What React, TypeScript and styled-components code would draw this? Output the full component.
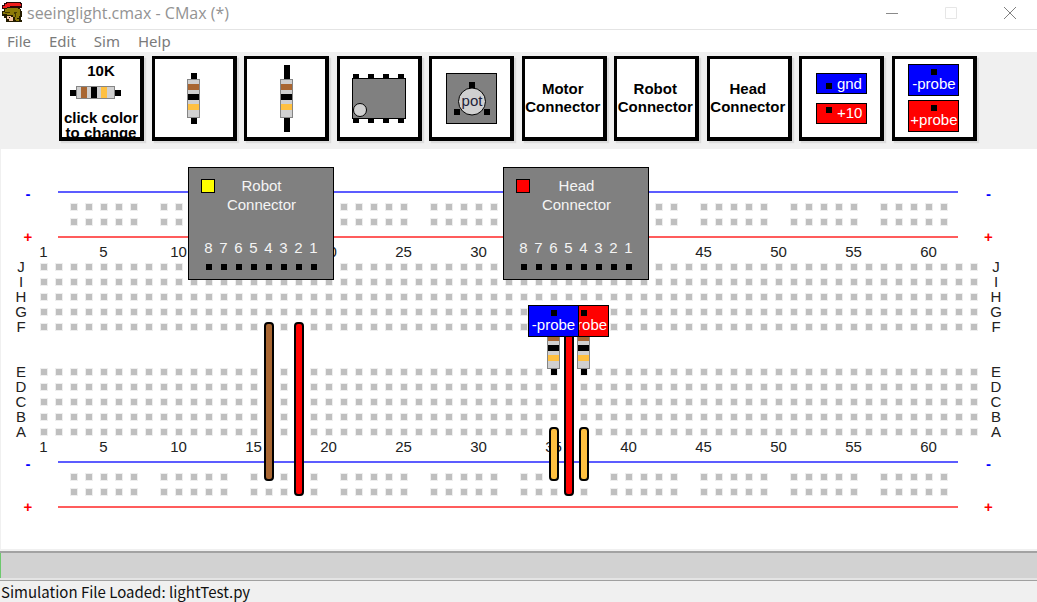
import React from "react";
import styled, { createGlobalStyle } from "styled-components";

const PITCH = 15;
const COLUMNS = 63;

const color = {
  face: "#f0f0f0",
  hole: "#bfbfbf",
  blueRail: "#5c5cff",
  redRail: "#ff5c5c",
  brown: "#a86632",
  amber: "#ffc040",
  body: "#d0d0d0",
  chip: "#808080",
};

const GlobalStyle = createGlobalStyle`
  * { box-sizing: border-box; }
  body { margin: 0; background: #fff; }
  button { margin: 0; padding: 0; border: 0; background: none; font: inherit; color: inherit; }
`;

const Window = styled.div`
  min-height: 100vh;
  display: flex;
  flex-direction: column;
  background: #fff;
  font-family: "Liberation Sans", Arial, sans-serif;
  font-size: 15px;
`;

const TitleBar = styled.header`
  height: 30px;
  display: flex;
  align-items: center;
  padding: 0 20px 4px 2px;
  border-bottom: 1px solid #e4e4e4;
  font-family: "Open Sans", sans-serif;
`;

const Title = styled.h1`
  flex: 1;
  margin: 0 0 0 5px;
  font-size: 16px;
  line-height: 20px;
  font-weight: 400;
  color: #939393;
`;

const WindowControls = styled.div`
  display: flex;
  gap: 45px;
`;

const ControlButton = styled.button<{ $stroke: string }>`
  width: 14px;
  height: 14px;
  display: block;
  svg { display: block; fill: none; stroke: ${(p) => p.$stroke}; }
`;

const MenuBar = styled.nav`
  height: 22px;
  display: flex;
  align-items: center;
  gap: 18px;
  padding-left: 7px;
  font-family: "Noto Sans", sans-serif;
  font-size: 15px;
  line-height: 20px;
  color: #7a7a7a;
`;

const MenuButton = styled.button``;

const Toolbar = styled.div`
  height: 97px;
  display: flex;
  justify-content: space-between;
  align-items: flex-start;
  padding: 4px 60px 0 59px;
  background: ${color.face};
`;

const Tile = styled.button<{ $gap?: number }>`
  width: 85px;
  height: 85px;
  display: flex;
  flex-direction: column;
  align-items: center;
  justify-content: center;
  gap: ${(p) => p.$gap ?? 0}px;
  border: solid #000;
  border-width: 3px 4px 4px 3px;
  background: #fff;
  box-shadow: 2px 2px 1px #dcdcdc;
  overflow: hidden;
  svg { display: block; flex: none; }
`;

const TileName = styled.span`
  padding-right: 2px;
  line-height: 18px;
  font-weight: 700;
  text-align: center;
  white-space: pre-line;
`;

const ResistorPicker = styled.span`
  align-self: stretch;
  height: 78px;
  display: flex;
  flex-direction: column;
  align-items: center;
  padding-top: 3px;
  font-weight: 700;
  line-height: 18px;
`;

const PickerHint = styled.span`
  margin-top: 11px;
  line-height: 15px;
  white-space: nowrap;
  text-align: center;
`;

const PickerDrawing = styled.span`
  margin: 6px 12px 0 0;
`;

const Pin = styled.span`
  flex: none;
  width: 6px;
  height: 6px;
  background: #000;
`;

const Power = styled.span<{ $fill: string; $raised?: boolean }>`
  width: 51px;
  height: 21px;
  display: flex;
  gap: 5px;
  padding: ${(p) => (p.$raised ? 3 : 9)}px 0 0 9px;
  border: 1px solid #000;
  background: ${(p) => p.$fill};
  color: #fff;
`;

const PowerName = styled.span<{ $raised?: boolean }>`
  margin-top: ${(p) => (p.$raised ? -4 : -9)}px;
  line-height: 19px;
`;

const ProbeBox = styled.span<{ $fill: string }>`
  width: 51px;
  height: 32px;
  display: flex;
  flex-direction: column;
  align-items: center;
  padding-top: 4px;
  border: 1px solid #000;
  background: ${(p) => p.$fill};
  color: #fff;
  line-height: 17px;
  white-space: nowrap;
`;

const Canvas = styled.main`
  flex: 1;
  padding: 35px 0 35px;
  border-left: 1px solid #f0f0f0;
  overflow: hidden;
`;

const Board = styled.div`
  position: relative;
  width: max-content;
  margin-left: -1px;
`;

const BoardRow = styled.div`
  height: ${PITCH}px;
  display: flex;
  line-height: ${PITCH}px;
  color: #222;
`;

const SideLabel = styled.span<{ $side: "left" | "right" }>`
  width: 36px;
  text-align: center;
  padding: ${(p) => (p.$side === "left" ? "0 0 0 6px" : "0 6px 0 0")};
`;

const Polarity = styled(SideLabel)<{ $negative?: boolean }>`
  padding: ${(p) => (p.$side === "left" ? "0 0 0 20px" : "0 21px 0 0")};
  font-weight: 700;
  line-height: ${(p) => (p.$negative ? 19 : 15)}px;
  color: ${(p) => (p.$negative ? "#00f" : "#f00")};
`;

const Cells = styled.div`
  display: grid;
  grid-template-columns: repeat(${COLUMNS}, ${PITCH}px);
`;

const Hole = styled.i<{ $col: number }>`
  grid-column: ${(p) => p.$col};
  width: 8px;
  height: 8px;
  margin: 4px 0 0 4px;
  border: 1px solid #eeeeee;
  background: ${color.hole};
`;

const ColumnNumber = styled.span<{ $col: number }>`
  grid-column: ${(p) => p.$col};
  grid-row: 1;
  justify-self: center;
`;

const RailLine = styled.div<{ $negative?: boolean }>`
  grid-column: 1 / -1;
  height: 2px;
  margin: 7px 23px 0 22px;
  background: ${(p) => (p.$negative ? color.blueRail : color.redRail)};
`;

/* Parts sit freely on the board, addressed by hole column and row. */
const Placed = styled.div<{ $col: number; $row: number; $dx: number; $dy: number }>`
  position: absolute;
  display: flex;
  left: ${(p) => 36 + (p.$col - 1) * PITCH + p.$dx}px;
  top: ${(p) => p.$row * PITCH + p.$dy}px;
`;

const WireBody = styled.span<{ $length: number; $fill: string }>`
  width: 10px;
  height: ${(p) => p.$length * PITCH + 9}px;
  border: 2px solid #000;
  border-radius: 4px;
  background: ${(p) => p.$fill};
`;

const ConnectorBox = styled.div`
  width: 146px;
  height: 113px;
  display: flex;
  flex-direction: column;
  justify-content: space-between;
  padding: 8px 0 9px;
  border: 1px solid #000;
  background: ${color.chip};
  color: #f4f4f4;
`;

const ConnectorHead = styled.div`
  display: grid;
  grid-template-columns: 14px 1fr;
  column-gap: 4px;
  padding: 0 29px 0 12px;
`;

const Lamp = styled.span<{ $fill: string }>`
  width: 14px;
  height: 14px;
  margin-top: 3px;
  border: 1px solid #000;
  background: ${(p) => p.$fill};
`;

const ConnectorName = styled.span`
  text-align: center;
  line-height: 19px;
  white-space: pre-line;
`;

const PinRow = styled.div`
  display: flex;
  padding-left: 12px;
`;

const NumberedPin = styled.span`
  width: ${PITCH}px;
  display: flex;
  flex-direction: column;
  align-items: center;
  gap: 7px;
  line-height: 18px;
`;

const Progress = styled.div`
  height: 31px;
  border-top: 2px solid ${color.face};
  border-bottom: 2px solid #e4e4e4;
  background: #d2d2d2;
  box-shadow: inset 0 2px #a2a2a2, inset 1px 0 #6cc86c;
`;

const StatusBar = styled.footer`
  height: 23px;
  border-top: 1px solid #a0a0a0;
  padding-left: 1px;
  background: ${color.face};
  font-family: "Noto Sans CJK SC", sans-serif;
  font-size: 15px;
  line-height: 22px;
  color: #111;
`;

function HelmetLogo() {
  return (
    <svg width="20" height="21" viewBox="0 0 20 21" shapeRendering="crispEdges" aria-hidden="true">
      <path d="M4 0h15v1h1v5h-2v1h-12v1h-3v-1h-3v-4h2v-2h2z" fill="#2a0606" />
      <path d="M5 1h13v1h1v2h-11v1h-3v1h-4v-2h2v-2h2z" fill="#f01c1c" />
      <path d="M5 6h13v1h1v2h1v6h-1v3h1v2h-16v-4h-2v-2h-2v-5h2v-3h3z" fill="#241c00" />
      <path d="M5 6h11v1h2v7h-1v2h-2v2h-2v-3h-2v-2h-6v-1h-4v-2h2v-3h2z" fill="#8c7a08" />
      <path d="M3 10h5v1h-5zM12 10h3v1h-1v4h-1v-3h-1z" fill="#453900" />
      <path d="M5 14h4v1h2v4h-4v-2h-2z" fill="#f6c6a6" />
      <path d="M7 15h1v1h-1z" fill="#000" />
      <path d="M14 17h3v2h-3z" fill="#8c7a08" />
    </svg>
  );
}

function ResistorDrawing({ lead = 6, horizontal = false }: { lead?: number; horizontal?: boolean }) {
  const length = 39 + lead * 2;
  const width = horizontal ? length : 13;
  const height = horizontal ? 13 : length;
  return (
    <svg width={width} height={height} aria-hidden="true">
      <g transform={horizontal ? "matrix(0 1 1 0 0 0)" : undefined} shapeRendering="crispEdges">
        <rect x="4" y="0" width="6" height={length} fill="#000" />
        <rect x="0" y={lead} width="13" height="39" fill="#858585" />
        <rect x="1" y={lead + 1} width="11" height="37" fill={color.body} />
        <rect x="1" y={lead + 5} width="11" height="6" fill={color.brown} />
        <rect x="1" y={lead + 15} width="11" height="6" fill="#000" />
        <rect x="1" y={lead + 25} width="11" height="6" fill={color.amber} />
      </g>
    </svg>
  );
}

function OpAmpDrawing() {
  return (
    <svg width="54" height="49" aria-hidden="true">
      {[1, 16, 31, 46].map((x) => (
        <rect key={x} x={x} y="0" width="6" height="49" fill="#000" />
      ))}
      <rect x="0.5" y="4.5" width="53" height="40" fill={color.chip} stroke="#000" />
      <circle cx="8" cy="36" r="6.5" fill={color.body} stroke="#000" />
    </svg>
  );
}

function PotDrawing() {
  return (
    <svg width="51" height="51" aria-hidden="true">
      <rect x="0.5" y="0.5" width="50" height="50" fill={color.chip} stroke="#000" />
      <circle cx="26" cy="28.5" r="13.5" fill={color.body} stroke="#000" />
      <rect x="23" y="9" width="6" height="6" />
      <rect x="8" y="36" width="6" height="6" />
      <rect x="38" y="36" width="6" height="6" />
      <text x="26" y="33" textAnchor="middle" fontSize="15" fill="#222238">pot</text>
    </svg>
  );
}

function Probe({ name, fill }: { name: string; fill: string }) {
  return (
    <ProbeBox $fill={fill}>
      <Pin />
      <span>{name}</span>
    </ProbeBox>
  );
}

function Connector({ col, name, lamp }: { col: number; name: string; lamp: string }) {
  return (
    <Placed $col={col} $row={-1} $dx={-13} $dy={-2}>
      <ConnectorBox>
        <ConnectorHead>
          <Lamp $fill={lamp} />
          <ConnectorName>{name + "\nConnector"}</ConnectorName>
        </ConnectorHead>
        <PinRow>
          {[8, 7, 6, 5, 4, 3, 2, 1].map((n) => (
            <NumberedPin key={n}>
              {n}
              <Pin />
            </NumberedPin>
          ))}
        </PinRow>
      </ConnectorBox>
    </Placed>
  );
}

function Wire({ col, row, length, fill }: { col: number; row: number; length: number; fill: string }) {
  return (
    <Placed $col={col} $row={row} $dx={3} $dy={3}>
      <WireBody $length={length} $fill={fill} />
    </Placed>
  );
}

const allColumns = Array.from({ length: COLUMNS }, (_, i) => i + 1);
const railColumns = allColumns.filter((c) => c >= 3 && c <= 61 && c % 6 !== 2);
const numberedColumns = allColumns.filter((c) => c === 1 || c % 5 === 0);

function HoleRow({ label, columns = allColumns }: { label?: string; columns?: number[] }) {
  return (
    <BoardRow>
      <SideLabel $side="left">{label}</SideLabel>
      <Cells>
        {columns.map((c) => (
          <Hole key={c} $col={c} />
        ))}
      </Cells>
      <SideLabel $side="right">{label}</SideLabel>
    </BoardRow>
  );
}

/* Numbers that lie wholly under a connector are left out. */
function NumberRow({ covered = [] }: { covered?: number[] }) {
  return (
    <BoardRow>
      <SideLabel $side="left" />
      <Cells>
        {numberedColumns.filter((c) => !covered.includes(c)).map((c) => (
          <ColumnNumber key={c} $col={c}>{c}</ColumnNumber>
        ))}
      </Cells>
    </BoardRow>
  );
}

function RailRow({ negative }: { negative?: boolean }) {
  const sign = negative ? "-" : "+";
  return (
    <BoardRow>
      <Polarity $side="left" $negative={negative}>{sign}</Polarity>
      <Cells>
        <RailLine $negative={negative} />
      </Cells>
      <Polarity $side="right" $negative={negative}>{sign}</Polarity>
    </BoardRow>
  );
}

function PowerRails() {
  return (
    <>
      <RailRow negative />
      <HoleRow columns={railColumns} />
      <HoleRow columns={railColumns} />
      <RailRow />
    </>
  );
}

export default function App() {
  return (
    <Window>
      <GlobalStyle />
      <TitleBar>
        <HelmetLogo />
        <Title>seeinglight.cmax - CMax (*)</Title>
        <WindowControls>
          <ControlButton $stroke="#8a8a8a" aria-label="Minimize">
            <svg width="14" height="14"><path d="M1 7.5h12" /></svg>
          </ControlButton>
          <ControlButton $stroke="#e6e6e6" aria-label="Maximize">
            <svg width="14" height="14"><path d="M1.5 1.5h11v11h-11z" /></svg>
          </ControlButton>
          <ControlButton $stroke="#808080" aria-label="Close">
            <svg width="14" height="14"><path d="M1 1l12 12M13 1L1 13" /></svg>
          </ControlButton>
        </WindowControls>
      </TitleBar>
      <MenuBar>
        {["File", "Edit", "Sim", "Help"].map((m) => (
          <MenuButton key={m}>{m}</MenuButton>
        ))}
      </MenuBar>
      <Toolbar>
        <Tile>
          <ResistorPicker>
            10K
            <PickerDrawing><ResistorDrawing horizontal /></PickerDrawing>
            <PickerHint>click color<br />to change</PickerHint>
          </ResistorPicker>
        </Tile>
        <Tile aria-label="Resistor"><ResistorDrawing /></Tile>
        <Tile aria-label="Long resistor"><ResistorDrawing lead={14} /></Tile>
        <Tile aria-label="Op amp"><OpAmpDrawing /></Tile>
        <Tile><PotDrawing /></Tile>
        {["Motor", "Robot", "Head"].map((n) => (
          <Tile key={n}><TileName>{n + "\nConnector"}</TileName></Tile>
        ))}
        <Tile $gap={9}>
          <Power $fill="#00f"><Pin /><PowerName>gnd</PowerName></Power>
          <Power $fill="#f00" $raised><Pin /><PowerName $raised>+10</PowerName></Power>
        </Tile>
        <Tile $gap={4}>
          <Probe name="-probe" fill="#00f" />
          <Probe name="+probe" fill="#f00" />
        </Tile>
      </Toolbar>
      <Canvas>
        <Board>
          <PowerRails />
          <NumberRow covered={[15, 35, 40]} />
          {["J", "I", "H", "G", "F"].map((l) => <HoleRow key={l} label={l} />)}
          <BoardRow />
          <BoardRow />
          {["E", "D", "C", "B", "A"].map((l) => <HoleRow key={l} label={l} />)}
          <NumberRow />
          <PowerRails />

          <Connector col={12} name="Robot" lamp="#ff0" />
          <Connector col={33} name="Head" lamp="#f00" />
          {[35, 37].map((c) => (
            <Placed key={c} $col={c} $row={9} $dx={1} $dy={5}><ResistorDrawing /></Placed>
          ))}
          <Wire col={16} row={9} length={10} fill={color.brown} />
          <Wire col={18} row={9} length={11} fill="#f00" />
          <Wire col={36} row={9} length={11} fill="#f00" />
          <Wire col={35} row={16} length={3} fill={color.amber} />
          <Wire col={37} row={16} length={3} fill={color.amber} />
          <Placed $col={37} $row={8} $dx={-18} $dy={1}><Probe name="+probe" fill="#f00" /></Placed>
          <Placed $col={35} $row={8} $dx={-18} $dy={1}><Probe name="-probe" fill="#00f" /></Placed>
        </Board>
      </Canvas>
      <Progress role="progressbar" aria-label="Simulation time" aria-valuenow={0} />
      <StatusBar>Simulation File Loaded: lightTest.py</StatusBar>
    </Window>
  );
}
